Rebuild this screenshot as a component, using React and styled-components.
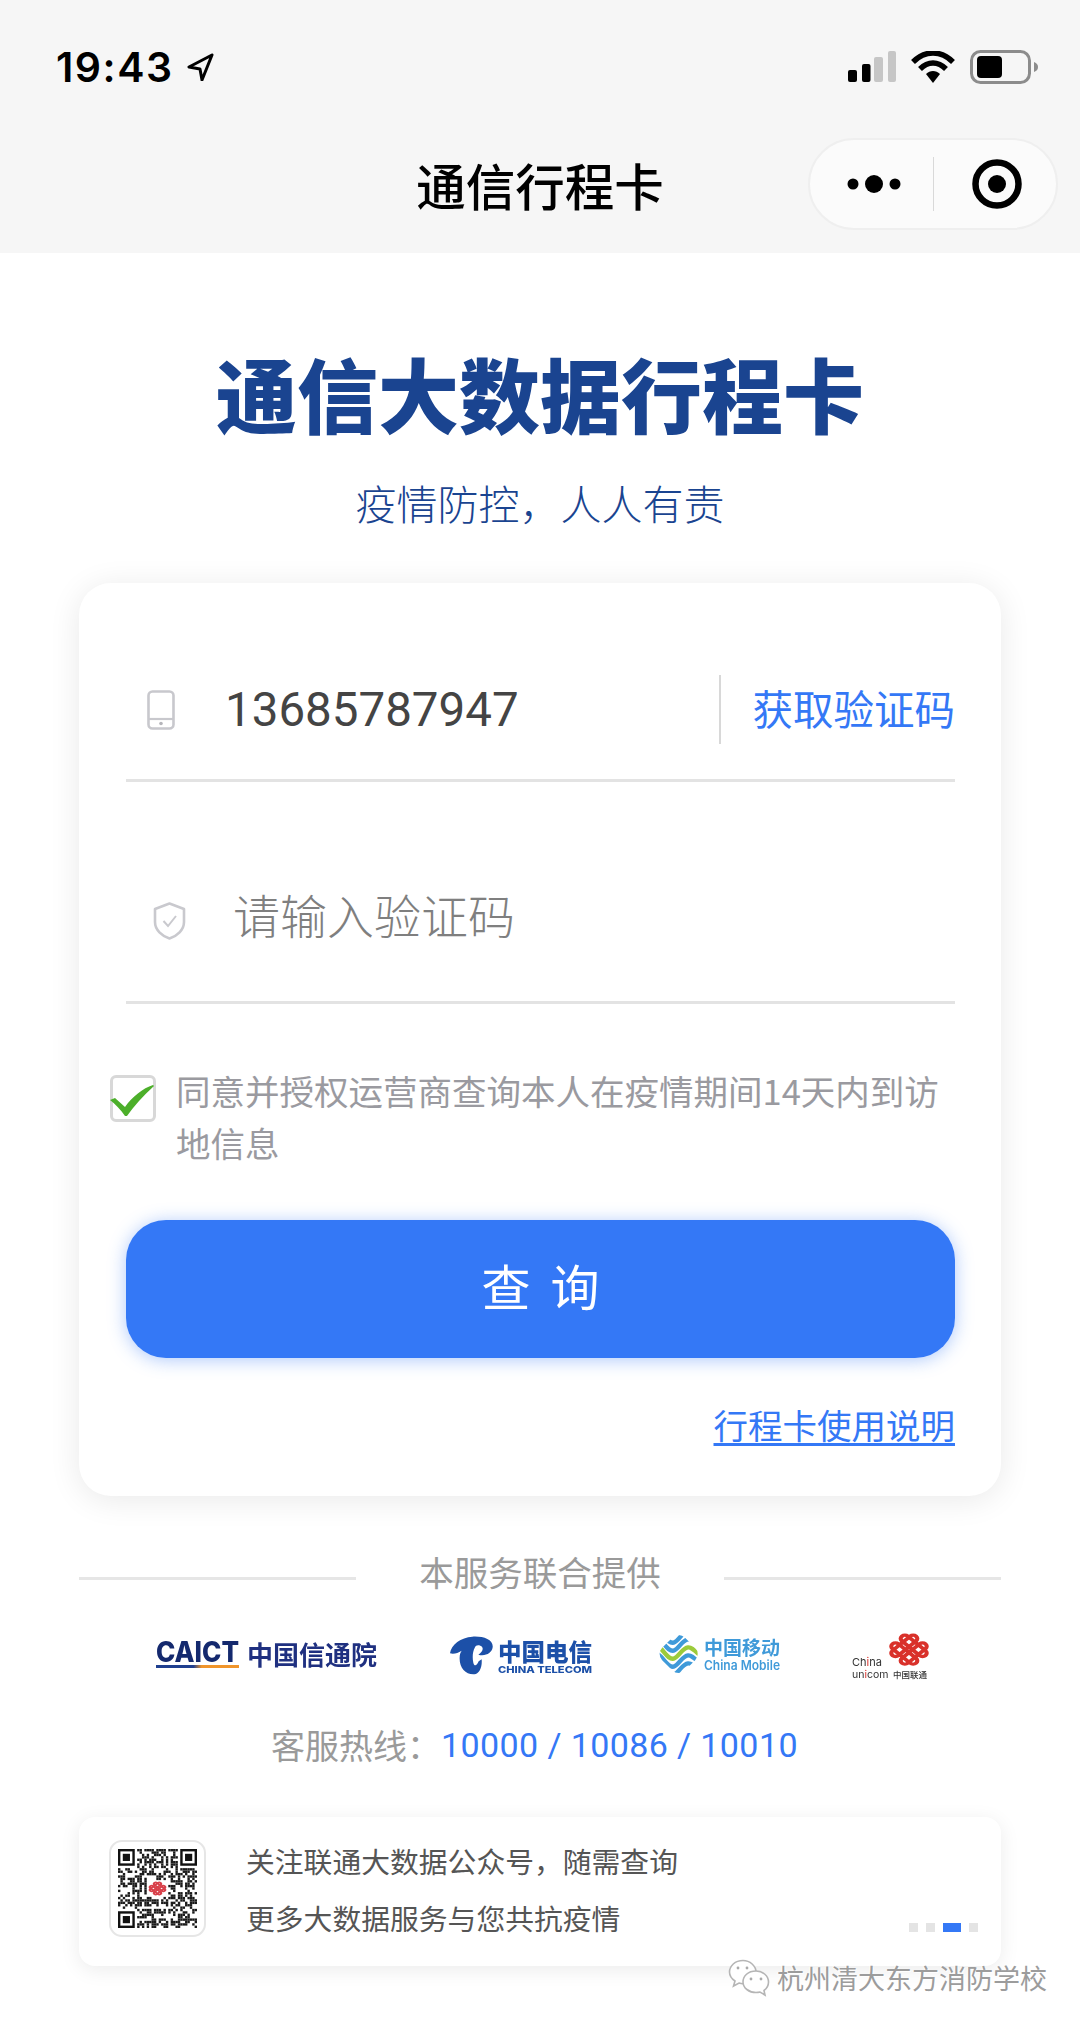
import React from "react";
import styled, { createGlobalStyle } from "styled-components";

const CJK = `"Noto Sans CJK SC", "Noto Sans", sans-serif`;
const BLUE = "#3478f6";

const GlobalStyle = createGlobalStyle`
  html, body {
    margin: 0;
    padding: 0;
    background: #fff;
  }
  * {
    box-sizing: border-box;
  }
`;

const Page = styled.div`
  position: relative;
  width: 1080px;
  height: 2028px;
  overflow: hidden;
  background: #fff;
  font-family: ${CJK};
`;

const Header = styled.header`
  height: 253px;
  background: #f6f6f6;
`;

const StatusBar = styled.div`
  display: flex;
  align-items: center;
  height: 134px;
  padding: 0 42px 0 56px;
`;

const Time = styled.span`
  font-family: Inter, sans-serif;
  font-size: 41px;
  font-weight: 600;
  letter-spacing: 1.5px;
  color: #000;
`;

const LocationArrow = styled.svg`
  width: 28px;
  height: 28px;
  margin-left: 12px;
`;

const StatusIcons = styled.div`
  display: flex;
  align-items: center;
  gap: 15px;
  margin-left: auto;
`;

const NavBar = styled.div`
  display: grid;
  grid-template-columns: 1fr auto 1fr;
  align-items: center;
  height: 119px;
  padding-bottom: 19px;
`;

const NavTitle = styled.h1`
  grid-column: 2;
  margin: 0;
  font-size: 49.5px;
  font-weight: 500;
  color: #000;
`;

const Capsule = styled.div`
  grid-column: 3;
  justify-self: end;
  display: flex;
  align-items: center;
  width: 250px;
  height: 92px;
  margin-right: 22px;
  border: 2px solid #efefef;
  border-radius: 46px;
  background: #fbfbfb;
`;

const CapsuleDots = styled.svg`
  width: 54px;
  height: 20px;
  margin-left: 37px;
`;

const CapsuleLine = styled.span`
  width: 1px;
  height: 54px;
  margin-left: 32px;
  background: #d9d9d9;
`;

const CapsuleTarget = styled.svg`
  width: 50px;
  height: 50px;
  margin-left: 38px;
`;

const BrandTitle = styled.h2`
  margin: 99px 0 0;
  height: 80px;
  font-size: 81px;
  line-height: 80px;
  font-weight: 900;
  text-align: center;
  color: #1a4490;
`;

const BrandSlogan = styled.p`
  margin: 45px 0 0;
  height: 50px;
  font-size: 41px;
  line-height: 50px;
  font-weight: 300;
  text-align: center;
  color: #1a4490;
`;

const Card = styled.section`
  width: 922px;
  height: 913px;
  margin: 56px auto 0;
  padding: 57px 46px 0 47px;
  border-radius: 32px;
  background: #fff;
  box-shadow: 0 4px 32px rgba(0, 0, 0, 0.09);
`;

const Field = styled.div`
  display: flex;
  align-items: center;
  height: ${(p) => p.$height}px;
  margin-top: ${(p) => p.$top || 0}px;
  border-bottom: 3px solid #e3e3e3;
`;

const PhoneIcon = styled.svg`
  flex-shrink: 0;
  width: 28px;
  height: 40px;
  margin: 0 50px 0 21px;
`;

const ShieldIcon = styled.svg`
  flex-shrink: 0;
  width: 33px;
  height: 38px;
  margin: 10px 47px 0 27px;
`;

const PhoneNumber = styled.span`
  font-family: Roboto, sans-serif;
  font-size: 47.5px;
  color: #444;
`;

const GetCode = styled.span`
  display: flex;
  align-items: center;
  height: 69px;
  margin-left: auto;
  padding: 0 0 5px 32px;
  border-left: 2px solid #d8d8d8;
  font-size: 40.5px;
  color: ${BLUE};
`;

const Placeholder = styled.span`
  padding-bottom: 5px;
  font-size: 47px;
  font-weight: 300;
  color: #7f7f7f;
`;

const Agreement = styled.div`
  display: flex;
  align-items: flex-start;
  margin: 63px 0 0 -16px;
`;

const CheckBox = styled.span`
  position: relative;
  flex-shrink: 0;
  width: 46px;
  height: 47px;
  margin: 8px 20px 0 0;
  border: 3px solid #d8d8d8;
  border-radius: 6px;
  background: #fff;
`;

const CheckMark = styled.svg`
  position: absolute;
  left: -3px;
  top: -3px;
  width: 46px;
  height: 47px;
`;

const AgreementText = styled.p`
  height: 104px;
  margin: -3px 0 3px;
  font-size: 34.5px;
  line-height: 52px;
  color: #9a9aa0;
`;

const QueryButton = styled.button`
  display: block;
  width: 100%;
  height: 138px;
  margin-top: 49px;
  padding: 0 0 10px;
  border: 0;
  border-radius: 40px;
  background: ${BLUE};
  box-shadow: 0 2px 18px rgba(52, 120, 246, 0.4);
  font-family: ${CJK};
  font-size: 49px;
  font-weight: 400;
  letter-spacing: 20px;
  text-indent: 20px;
  color: #fff;
`;

const GuideLink = styled.a`
  display: block;
  margin-top: 41px;
  font-size: 34.5px;
  line-height: 50px;
  text-align: right;
  text-decoration: underline;
  text-underline-offset: 4px;
  color: ${BLUE};
`;

const Divider = styled.div`
  display: flex;
  align-items: center;
  gap: 63px;
  width: 922px;
  margin: 50px auto 0;
  font-size: 34.5px;
  line-height: 50px;
  color: #9a9a9a;
`;

const DividerLine = styled.span`
  flex: 1;
  height: 3px;
  margin-top: 14px;
  background: #e6e6e6;
`;

const Logos = styled.div`
  display: grid;
  grid-template-columns: 294px 209px 193px 79px;
  height: 52px;
  margin: 32px 0 0 156px;
`;

const Logo = styled.svg`
  display: block;
  width: ${(p) => p.$w}px;
  height: 52px;
  overflow: visible;
  filter: blur(0.3px);
  font-family: ${CJK};
`;

const Hotline = styled.div`
  display: flex;
  justify-content: center;
  margin-top: 40px;
  padding-right: 11px;
  font-size: 34px;
  line-height: 50px;
  color: #9a9a9a;
`;

const HotlineNumbers = styled.span`
  font-family: Roboto, sans-serif;
  letter-spacing: 0.4px;
  color: ${BLUE};
`;

const PromoCard = styled.section`
  display: flex;
  align-items: center;
  width: 922px;
  height: 149px;
  margin: 47px auto 0;
  padding-left: 30px;
  border-radius: 16px;
  background: #fff;
  box-shadow: 0 4px 20px rgba(0, 0, 0, 0.08);
`;

const QrFrame = styled.div`
  flex-shrink: 0;
  width: 97px;
  height: 97px;
  margin-bottom: 6px;
  padding: 7px;
  border: 2px solid #e6e6e6;
  border-radius: 13px;
`;

const QrCode = styled.svg`
  display: block;
  width: 79px;
  height: 79px;
  filter: blur(0.5px);
`;

const PromoText = styled.div`
  margin-left: 40px;
  padding-bottom: 5px;
  font-size: 28.8px;
  line-height: 57px;
  color: #555;
`;

const Pager = styled.div`
  display: flex;
  gap: 8px;
  align-self: flex-end;
  margin: 0 23px 34px auto;
`;

const PagerDot = styled.span`
  width: ${(p) => (p.$active ? 18 : 9)}px;
  height: 9px;
  background: ${(p) => (p.$active ? BLUE : "#e4e4e4")};
`;

const Watermark = styled.div`
  position: absolute;
  left: 728px;
  top: 1958px;
  display: flex;
  align-items: center;
  gap: 7px;
  font-size: 27px;
  line-height: 40px;
  color: #9c9c9c;
  text-shadow: 1px 1px 1px rgba(255, 255, 255, 0.9), -1px 0 1px rgba(255, 255, 255, 0.9);
`;

const WechatIcon = styled.svg`
  width: 42px;
  height: 38px;
`;

const Knot = ({ cx, cy, sx = 1.25, sy = 1.02, width = 10, color = "#d9312a" }) => (
  <g
    transform={`translate(${cx} ${cy}) scale(${sx} ${sy}) rotate(45)`}
    fill="none"
    stroke={color}
    strokeWidth={width}
  >
    <rect x="-40" y="-26" width="80" height="20" rx="10" />
    <rect x="-40" y="6" width="80" height="20" rx="10" />
    <rect x="-26" y="-40" width="20" height="80" rx="10" />
    <rect x="6" y="-40" width="20" height="80" rx="10" />
  </g>
);

// fake but stable modules, the real code is too blurred to read in the picture
const QR_SIZE = 33;
const qrModules = () => {
  const cells = [];
  let seed = 2029;
  for (let y = 0; y < QR_SIZE; y++) {
    for (let x = 0; x < QR_SIZE; x++) {
      seed = (seed * 1103515245 + 12345) & 0x7fffffff;
      const inFinder =
        (x < 8 && y < 8) || (x > 24 && y < 8) || (x < 8 && y > 24);
      const inLogo = x > 11 && x < 21 && y > 12 && y < 20;
      if (!inFinder && !inLogo && (seed >> 16) % 100 < 52) {
        cells.push([x, y]);
      }
    }
  }
  return cells;
};

const Finder = ({ x, y }) => (
  <g>
    <rect x={x + 0.5} y={y + 0.5} width="6" height="6" fill="none" stroke="#111" />
    <rect x={x + 2} y={y + 2} width="3" height="3" fill="#111" />
  </g>
);

const Qr = () => (
  <QrCode viewBox={`0 0 ${QR_SIZE} ${QR_SIZE}`}>
    {qrModules().map(([x, y]) => (
      <rect key={`${x}-${y}`} x={x} y={y} width="1" height="1" fill="#1a1a1a" />
    ))}
    <Finder x={0} y={0} />
    <Finder x={26} y={0} />
    <Finder x={0} y={26} />
    <Knot cx={16.5} cy={16.5} sx={0.075} sy={0.06} width={12} color="#d8404a" />
  </QrCode>
);

const CaictLogo = () => (
  <Logo $w={224} viewBox="0 0 224 52">
    <defs>
      <linearGradient id="caictBar">
        <stop offset="0.45" stopColor="#1f3f8f" />
        <stop offset="0.55" stopColor="#f0952b" />
      </linearGradient>
    </defs>
    <text
      x="0"
      y="34"
      fontFamily="Inter, sans-serif"
      fontSize="28"
      fontWeight="800"
      fill="#14296e"
      textLength="83"
      lengthAdjust="spacingAndGlyphs"
    >
      CAICT
    </text>
    <rect x="0" y="37" width="83" height="3" fill="url(#caictBar)" />
    <text x="91" y="37" fontSize="26" fontWeight="700" fill="#1f3080">
      中国信通院
    </text>
  </Logo>
);

const TelecomLogo = () => (
  <Logo $w={142} viewBox="0 0 142 52">
    <g transform="translate(-5 2) scale(0.3333)" fill="#1c50a8">
      <path d="M15 70 C18 44 48 22 82 20 C114 18 146 28 143 52 C141 70 120 80 100 74 C114 66 118 52 106 47 C97 44 92 47 90 52 C82 66 82 85 85 98 C88 110 95 108 101 94 L110 88 C112 110 104 132 88 133 C62 135 42 112 44 82 C44 74 46 68 50 62 C38 68 28 74 15 70 Z" />
    </g>
    <text x="48" y="33" fontSize="23.5" fontWeight="900" fill="#1c50a8">
      中国电信
    </text>
    <text
      x="48"
      y="45"
      fontFamily="Inter, sans-serif"
      fontSize="9"
      fontWeight="800"
      fill="#1c50a8"
      textLength="94"
      lengthAdjust="spacingAndGlyphs"
    >
      CHINA TELECOM
    </text>
  </Logo>
);

const waveAt = (dy) =>
  `M10 ${48 + dy} L25 ${60 + dy} C40 ${75 + dy} 50 ${95 + dy} 65 ${92 + dy} C80 ${88 + dy} 90 ${60 + dy} 108 ${58 + dy} C120 ${57 + dy} 128 ${68 + dy} 150 ${88 + dy}`;

const MobileLogo = () => (
  <Logo $w={123} viewBox="0 0 123 52">
    <defs>
      <clipPath id="mobileClip">
        <rect x="32" y="24" width="96" height="96" rx="26" transform="rotate(45 80 72)" />
      </clipPath>
    </defs>
    <g transform="translate(-7 2) scale(0.3333)" clipPath="url(#mobileClip)" fill="none" strokeWidth="13">
      <path d={waveAt(-54)} stroke="#3f9ad9" />
      <path d={waveAt(-30)} stroke="#3f9ad9" />
      <path d={waveAt(-6)} stroke="#9ccb3b" />
      <path d={waveAt(18)} stroke="#3f9ad9" />
      <path d={waveAt(42)} stroke="#3f9ad9" />
    </g>
    <text x="45" y="27" fontSize="19" fontWeight="700" fill="#3f9ad9">
      中国移动
    </text>
    <text
      x="45"
      y="42"
      fontFamily="Inter, sans-serif"
      fontSize="13"
      fontWeight="600"
      fill="#3f9ad9"
      textLength="76"
      lengthAdjust="spacingAndGlyphs"
    >
      China Mobile
    </text>
  </Logo>
);

const UnicomLogo = () => (
  <Logo $w={79} viewBox="0 0 79 52">
    <g transform="translate(-7 0) scale(0.3333)">
      <Knot cx={192} cy={65} />
    </g>
    <text x="0" y="38" fontFamily="Inter, sans-serif" fontSize="11" fill="#333">
      Ch<tspan fill="#d9312a">i</tspan>na
    </text>
    <text x="0" y="50" fontFamily="Inter, sans-serif" fontSize="10.5" fill="#333">
      un<tspan fill="#d9312a">i</tspan>com
    </text>
    <text x="41" y="50" fontSize="8.5" fontWeight="500" fill="#333">
      中国联通
    </text>
  </Logo>
);

export default function App() {
  return (
    <Page>
      <GlobalStyle />
      <Header>
        <StatusBar>
          <Time>19:43</Time>
          <LocationArrow viewBox="0 0 28 28">
            <path d="M26 2 L3 14 L14 16 L16 27 Z" fill="none" stroke="#000" strokeWidth="3" strokeLinejoin="round" />
          </LocationArrow>
          <StatusIcons>
            <svg width="48" height="32" viewBox="0 0 48 32">
              <rect x="0" y="19" width="9" height="12" rx="2" fill="#000" />
              <rect x="14" y="13" width="8.5" height="18" rx="2" fill="#000" />
              <rect x="26" y="6" width="9" height="25" rx="2" fill="#c6c6c6" />
              <rect x="40" y="0" width="8" height="31" rx="2" fill="#c6c6c6" />
            </svg>
            <svg width="44" height="32" viewBox="0 0 44 32">
              <path d="M2 11 C14 -1 30 -1 42 11" fill="none" stroke="#000" strokeWidth="5.5" />
              <path d="M9 18 C17 10 27 10 35 18" fill="none" stroke="#000" strokeWidth="5.5" />
              <path d="M15 23 C19 19 25 19 29 23 L22 32 Z" fill="#000" />
            </svg>
            <svg width="68" height="34" viewBox="0 0 68 34">
              <rect x="1.5" y="1.5" width="58" height="31" rx="9" fill="none" stroke="#8c8c8c" strokeWidth="3" />
              <rect x="7" y="6" width="25" height="22" rx="4" fill="#000" />
              <path d="M64 12 C67 13 68 15 68 17 C68 19 67 21 64 22 Z" fill="#8c8c8c" />
            </svg>
          </StatusIcons>
        </StatusBar>
        <NavBar>
          <NavTitle>通信行程卡</NavTitle>
          <Capsule>
            <CapsuleDots viewBox="0 0 54 20">
              <circle cx="6" cy="10" r="5.5" fill="#000" />
              <circle cx="27" cy="10" r="9" fill="#000" />
              <circle cx="48" cy="10" r="5.5" fill="#000" />
            </CapsuleDots>
            <CapsuleLine />
            <CapsuleTarget viewBox="0 0 50 50">
              <circle cx="25" cy="25" r="21.5" fill="none" stroke="#000" strokeWidth="6.5" />
              <circle cx="25" cy="25" r="9" fill="#000" />
            </CapsuleTarget>
          </Capsule>
        </NavBar>
      </Header>

      <BrandTitle>通信大数据行程卡</BrandTitle>
      <BrandSlogan>疫情防控，人人有责</BrandSlogan>

      <Card>
        <Field $height={142}>
          <PhoneIcon viewBox="0 0 28 40">
            <rect x="1.5" y="1.5" width="25" height="37" rx="4" fill="none" stroke="#c8c8cd" strokeWidth="2.6" />
            <path d="M2 29 H26" stroke="#c8c8cd" strokeWidth="2.2" />
            <circle cx="14" cy="33.5" r="1.8" fill="#b5b5ba" />
          </PhoneIcon>
          <PhoneNumber>13685787947</PhoneNumber>
          <GetCode>获取验证码</GetCode>
        </Field>
        <Field $height={173} $top={49}>
          <ShieldIcon viewBox="0 0 33 38">
            <path d="M16.5 1.5 L31 7 V20 C31 28 24 34 16.5 36.5 C9 34 2 28 2 20 V7 Z" fill="none" stroke="#c9c9ce" strokeWidth="2.6" strokeLinejoin="round" />
            <path d="M10.5 19 L15 24 L23 14" fill="none" stroke="#c9c9ce" strokeWidth="2" />
          </ShieldIcon>
          <Placeholder>请输入验证码</Placeholder>
        </Field>

        <Agreement>
          <CheckBox>
            <CheckMark viewBox="0 0 46 47">
              <path d="M0 25 L5 23 L15 32 C22 22 33 13 43 10 L44 11 C33 21 24 31 17 41 L15 41 C11 35 5 29 0 25 Z" fill="#4caf2a" />
            </CheckMark>
          </CheckBox>
          <AgreementText>同意并授权运营商查询本人在疫情期间14天内到访地信息</AgreementText>
        </Agreement>

        <QueryButton>查询</QueryButton>
        <GuideLink>行程卡使用说明</GuideLink>
      </Card>

      <Divider>
        <DividerLine />
        <span>本服务联合提供</span>
        <DividerLine />
      </Divider>

      <Logos>
        <CaictLogo />
        <TelecomLogo />
        <MobileLogo />
        <UnicomLogo />
      </Logos>

      <Hotline>
        客服热线：
        <HotlineNumbers>10000 / 10086 / 10010</HotlineNumbers>
      </Hotline>

      <PromoCard>
        <QrFrame>
          <Qr />
        </QrFrame>
        <PromoText>
          关注联通大数据公众号，随需查询
          <br />
          更多大数据服务与您共抗疫情
        </PromoText>
        <Pager>
          <PagerDot />
          <PagerDot />
          <PagerDot $active />
          <PagerDot />
        </Pager>
      </PromoCard>

      <Watermark>
        <WechatIcon viewBox="0 0 42 38">
          <path d="M15 1.5 C7 1.5 1.5 7 1.5 13 C1.5 17 4 20 7 22 L5.5 27 L11 24 C12.5 24.5 14 24.7 15 24.7 C22 24.7 28 19.5 28 13 C28 7 22 1.5 15 1.5 Z" fill="#fff" stroke="#b5b5b5" strokeWidth="1.6" />
          <path d="M28 12 C20 12 15 17 15 23 C15 29 21 33.5 28 33.5 C29.5 33.5 31 33.3 32 33 L37 36 L36 31.5 C38.8 29.5 40.5 26.5 40.5 23 C40.5 17 35 12 28 12 Z" fill="#fff" stroke="#b5b5b5" strokeWidth="1.6" />
          <circle cx="10" cy="9" r="1.4" fill="#aaa" />
          <circle cx="19" cy="9" r="1.4" fill="#aaa" />
          <circle cx="23" cy="20" r="1.4" fill="#aaa" />
          <circle cx="33" cy="20" r="1.4" fill="#aaa" />
        </WechatIcon>
        杭州清大东方消防学校
      </Watermark>
    </Page>
  );
}
